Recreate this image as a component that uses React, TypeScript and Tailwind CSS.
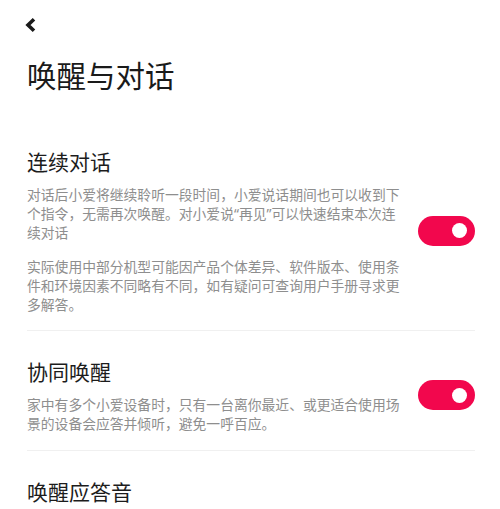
import React from "react";

const Q = ({ children }: { children: React.ReactNode }) => (
  <span style={{ fontFamily: '"Noto Sans", sans-serif' }}>{children}</span>
);

function Toggle() {
  return (
    <div className="relative shrink-0 w-[57px] h-[30px] rounded-full bg-[#f2074d]">
      <div className="absolute right-[8px] top-[7.5px] w-[15px] h-[15px] rounded-full bg-white" />
    </div>
  );
}

export default function App() {
  const font = { fontFamily: '"Noto Sans CJK SC", "Noto Sans", sans-serif' };
  return (
    <div className="w-[500px] h-[509px] overflow-hidden bg-white pl-[27px] pr-[25px]" style={font}>
      <div className="h-[54px] pt-[17px] -ml-[3px]">
        <svg width="13" height="16" viewBox="0 0 13 16" className="block">
          <path d="M10 2.2 L4 8 L10 13.8" fill="none" stroke="#1a1a1a" strokeWidth="3.6" strokeLinejoin="miter" />
        </svg>
      </div>
      <h1 className="text-[29.5px] leading-[40px] text-[#1a1a1a] font-normal">唤醒与对话</h1>

      <div className="mt-[53px] pb-[16px] border-b border-[#f0f0f0]">
        <div className="flex items-center justify-between">
          <div className="whitespace-nowrap">
            <div className="text-[21px] leading-[28px] text-[#1c1c1c]">连续对话</div>
            <div className="mt-[10px] text-[13.8px] leading-[19px] text-[#8e8e8e]">
              对话后小爱将继续聆听一段时间，小爱说话期间也可以收到下
              <br />
              个指令，无需再次唤醒。对小爱说<Q>“</Q>再见<Q>”</Q>可以快速结束本次连
              <br />
              续对话
            </div>
            <div className="mt-[15px] text-[13.8px] leading-[19px] text-[#8e8e8e]">
              实际使用中部分机型可能因产品个体差异、软件版本、使用条
              <br />
              件和环境因素不同略有不同，如有疑问可查询用户手册寻求更
              <br />
              多解答。
            </div>
          </div>
          <Toggle />
        </div>
      </div>

      <div className="pt-[26px] pb-[17px] border-b border-[#f0f0f0]">
        <div className="flex items-center justify-between">
          <div className="whitespace-nowrap">
            <div className="text-[21px] leading-[28px] text-[#1c1c1c]">协同唤醒</div>
            <div className="mt-[10px] text-[13.8px] leading-[19px] text-[#8e8e8e]">
              家中有多个小爱设备时，只有一台离你最近、或更适合使用场
              <br />
              景的设备会应答并倾听，避免一呼百应。
            </div>
          </div>
          <Toggle />
        </div>
      </div>

      <div className="pt-[26px]">
        <div className="text-[21px] leading-[28px] text-[#1c1c1c]">唤醒应答音</div>
      </div>
    </div>
  );
}
